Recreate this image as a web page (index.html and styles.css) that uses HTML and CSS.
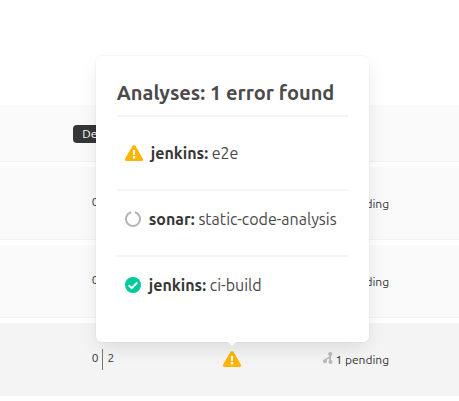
FILE: index.html
```
<!DOCTYPE html>
<html lang="en">
<head>
<meta charset="utf-8">
<title>Analyses</title>
<link rel="stylesheet" href="styles.css">
</head>
<body>
<svg class="sprite" aria-hidden="true">
  <symbol id="warning" viewBox="0 0 18 16">
    <path fill="#ffb400" d="M9 0C9.6 0 10.1.3 10.4.8L17.8 13.6C18.4 14.7 17.7 16 16.4 16H1.6C.3 16-.4 14.7.2 13.6L7.6.8C7.9.3 8.4 0 9 0Z"/>
    <path fill="#fff" d="M7.8 5h2.4l-.4 5H8.2zM7.8 11h2.4v2.4H7.8z"/>
  </symbol>
  <symbol id="branch" viewBox="0 0 10 12">
    <path fill="none" stroke="#b8b8b8" stroke-width="1.6" d="M7.2 2v8M7 4.5C6.8 7 2.500 5.500 2 9"/>
    <circle cx="7.200" cy="2" r="2" fill="#b8b8b8"/>
    <circle cx="2" cy="9.200" r="2" fill="#b8b8b8"/>
    <circle cx="7.500" cy="9.900" r="2" fill="#b8b8b8"/>
  </symbol>
</svg>
<table class="board">
  <colgroup><col class="col-count"><col class="col-status"><col class="col-pending"></colgroup>
  <thead>
    <tr><th class="count"><span class="badge">Details</span></th><th></th><th></th></tr>
  </thead>
  <tbody>
    <tr>
      <td class="count"><div class="counts"><span>0</span><span>2</span></div></td>
      <td></td>
      <td class="pending"><svg class="branch"><use href="#branch"/></svg> 1 pending</td>
    </tr>
    <tr>
      <td class="count"><div class="counts"><span>0</span><span>2</span></div></td>
      <td></td>
      <td class="pending"><svg class="branch"><use href="#branch"/></svg> 1 pending</td>
    </tr>
    <tr class="active">
      <td class="count"><div class="counts"><span>0</span><span>2</span></div></td>
      <td class="status">
        <div class="anchor">
          <svg class="warning" role="img" aria-label="Error"><use href="#warning"/></svg>
          <section class="popover">
            <h2>Analyses: 1 error found</h2>
            <ul>
              <li><svg class="warning"><use href="#warning"/></svg><span><b>jenkins:</b> e2e</span></li>
              <li>
                <svg class="round" viewBox="0 0 16 16"><path fill="none" stroke="#b5b5b5" stroke-width="2" d="M9.800 1.200A7 7 0 1 1 6.200 1.200"/></svg>
                <span><b>sonar:</b> static-code-analysis</span>
              </li>
              <li>
                <svg class="round" viewBox="0 0 16 16"><circle cx="8" cy="8" r="8" fill="#00c99b"/><path fill="none" stroke="#fff" stroke-width="2" d="M3.700 8.300 6.700 11.200 12.300 5.500"/></svg>
                <span><b>jenkins:</b> ci-build</span>
              </li>
            </ul>
          </section>
        </div>
      </td>
      <td class="pending"><svg class="branch"><use href="#branch"/></svg> 1 pending</td>
    </tr>
  </tbody>
</table>
</body>
</html>
```
FILE: styles.css
```
* {
  box-sizing: border-box;
}

body {
  margin: 0;
  padding-top: 100px;
  background: #fff;
  color: #4a4a4a;
  font-family: Ubuntu, "Noto Sans", sans-serif;
  font-size: 12px;
}

.sprite {
  position: absolute;
  width: 0;
  height: 0;
}

.board {
  width: 100%;
  table-layout: fixed;
  border-collapse: separate;
  border-spacing: 0 5px;
}

.col-count {
  width: 37%;
}

.col-status {
  width: 27%;
}

.board th,
.board td {
  height: 73px;
  padding: 0;
  background: #fafafa;
  border-bottom: 1px solid #f2f2f2;
  text-align: center;
  vertical-align: middle;
}

.board th {
  height: 57px;
  padding-top: 2px;
}

.board .active td {
  background: #f4f4f4;
  border-bottom-color: #f4f4f4;
}

.board .count {
  padding-left: 36px;
}

.board .pending {
  padding-right: 41px;
  color: #363636;
}

.badge {
  display: inline-block;
  padding: 0 13px 0 9px;
  border-radius: 4px;
  background: #363636;
  color: #fff;
  font-weight: 400;
  line-height: 18px;
}

.counts {
  display: flex;
  justify-content: center;
  height: 21px;
  color: #363636;
  line-height: 18px;
}

.counts span {
  padding: 0 4px;
}

.counts span + span {
  border-left: 1px solid #777;
}

.pending {
  white-space: nowrap;
}

.branch {
  width: 10px;
  height: 12px;
}

.warning {
  display: block;
  flex: none;
  width: 18px;
  height: 16px;
}

.round {
  flex: none;
  width: 16px;
  height: 16px;
}

.anchor {
  position: relative;
  width: 18px;
  margin: 0 auto;
}

.popover {
  position: absolute;
  bottom: 100%;
  left: -127px;
  width: 273px;
  margin-bottom: 9px;
  padding: 21px;
  border-radius: 6px;
  background: #fff;
  box-shadow: 0 8px 20px -2px rgba(10, 10, 10, 0.1), 0 0 0 1px rgba(10, 10, 10, 0.02);
  font-size: 16px;
  text-align: left;
}

.popover::after {
  content: "";
  position: absolute;
  top: 100%;
  left: 50%;
  margin-left: -4px;
  border: 4px solid transparent;
  border-top-color: #fff;
  border-bottom: 0;
}

.popover h2 {
  margin: 0;
  padding-bottom: 6px;
  border-bottom: 2px solid #f4f4f4;
  font-size: 20px;
  line-height: 32px;
  white-space: nowrap;
}

.popover ul {
  margin: 0;
  padding: 8px 0 0;
  list-style: none;
}

.popover li {
  display: flex;
  align-items: center;
  gap: 8px;
  height: 64px;
  padding: 0 8px 8px;
  white-space: nowrap;
}

.popover li + li {
  height: 66px;
  border-top: 2px solid #f4f4f4;
}

.popover b {
  color: #363636;
}
```
